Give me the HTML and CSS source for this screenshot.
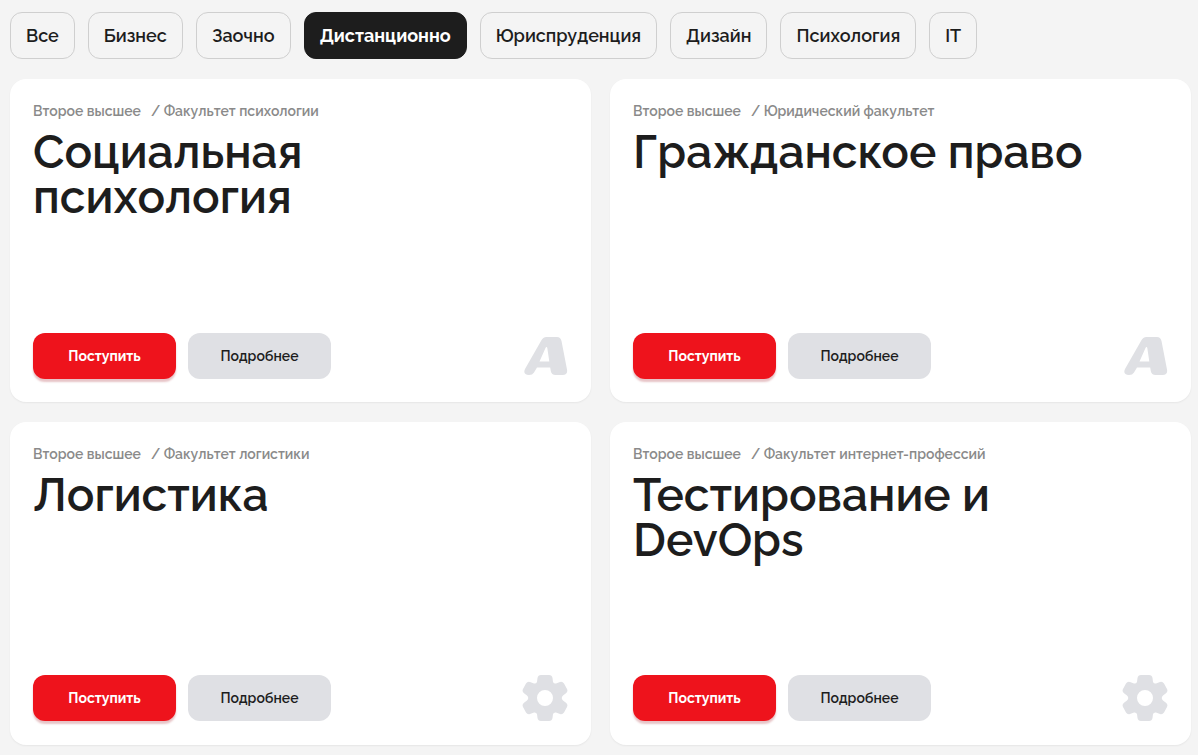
FILE: index.html
```html
<!DOCTYPE html>
<html lang="ru">
<head>
    <meta charset="UTF-8">
    <meta name="viewport" content="width=device-width, initial-scale=1.0">
    <title>Программы обучения</title>
    <link rel="stylesheet" href="styles.css">
</head>
<body>

    <!-- Общие иконки карточек -->
    <svg class="sprite" aria-hidden="true">
        <symbol id="icon-letter" viewBox="0 0 44 40">
            <path fill-rule="evenodd" d="M22.500 1H33Q36.500 1 37.500 5L43 33.500Q44 39 38.500 39H31.500Q27.500 39 26.800 35L26.200 31.500H13L10 36.500Q8.500 39 5 39Q-1.500 38.500 1 33L17 5Q19 1 22.500 1ZM22.500 11Q21.900 11 21.500 12L15.500 25.500H25.300L23.300 12Q23.100 11 22.500 11Z"/>
        </symbol>
        <symbol id="icon-gear" viewBox="0 0 46 48">
            <path fill-rule="evenodd" d="M19 1H27Q30 1 30.500 4L31 8Q32 10 34 9.500L38 8Q40.500 7.200 42 9.500L45 15Q46.200 17.500 44 19.200L41 21.500Q38.500 24 41 26.500L44 28.800Q46.200 30.500 45 33L42 38.500Q40.500 40.800 38 40L34 38.500Q32 38 31 40L30.500 44Q30 47 27 47H19Q16 47 15.500 44L15 40Q14 38 12 38.500L8 40Q5.500 40.800 4 38.500L1 33Q-.2 30.500 2 28.800L5 26.500Q7.500 24 5 21.500L2 19.200Q-.2 17.500 1 15L4 9.500Q5.500 7.200 8 8L12 9.500Q14 10 15 8L15.500 4Q16 1 19 1ZM23 16A8 8 0 1 0 23 32A8 8 0 1 0 23 16Z"/>
        </symbol>
    </svg>

    <!-- Фильтры -->
    <nav class="filters">
        <button type="button" class="filter">Все</button>
        <button type="button" class="filter">Бизнес</button>
        <button type="button" class="filter">Заочно</button>
        <button type="button" class="filter active">Дистанционно</button>
        <button type="button" class="filter">Юриспруденция</button>
        <button type="button" class="filter">Дизайн</button>
        <button type="button" class="filter">Психология</button>
        <button type="button" class="filter">IT</button>
    </nav>

    <!-- Карточки программ -->
    <main class="cards">
        <article class="card">
            <p class="path"><span>Второе высшее</span><span>/ Факультет психологии</span></p>
            <h2>Социальная психология</h2>
            <div class="card-footer">
                <button type="button" class="btn btn-red">Поступить</button>
                <button type="button" class="btn">Подробнее</button>
                <svg class="icon icon-letter" aria-hidden="true"><use href="#icon-letter"/></svg>
            </div>
        </article>

        <article class="card">
            <p class="path"><span>Второе высшее</span><span>/ Юридический факультет</span></p>
            <h2>Гражданское право</h2>
            <div class="card-footer">
                <button type="button" class="btn btn-red">Поступить</button>
                <button type="button" class="btn">Подробнее</button>
                <svg class="icon icon-letter" aria-hidden="true"><use href="#icon-letter"/></svg>
            </div>
        </article>

        <article class="card">
            <p class="path"><span>Второе высшее</span><span>/ Факультет логистики</span></p>
            <h2>Логистика</h2>
            <div class="card-footer">
                <button type="button" class="btn btn-red">Поступить</button>
                <button type="button" class="btn">Подробнее</button>
                <svg class="icon icon-gear" aria-hidden="true"><use href="#icon-gear"/></svg>
            </div>
        </article>

        <article class="card">
            <p class="path"><span>Второе высшее</span><span>/ Факультет интернет-профессий</span></p>
            <h2>Тестирование и DevOps</h2>
            <div class="card-footer">
                <button type="button" class="btn btn-red">Поступить</button>
                <button type="button" class="btn">Подробнее</button>
                <svg class="icon icon-gear" aria-hidden="true"><use href="#icon-gear"/></svg>
            </div>
        </article>
    </main>

</body>
</html>
```
FILE: styles.css
```css
/* Общие стили */
* {
    margin: 0;
    padding: 0;
    box-sizing: border-box;
}

body {
    background-color: #f4f4f4;
    color: #1d1d1d;
    font-family: Raleway, Lato, sans-serif;
    padding: 12px 7px 10px 10px;
}

button {
    font-family: inherit;
    color: inherit;
    cursor: pointer;
}

.sprite {
    display: none;
}

/* Фильтры */
.filters {
    display: flex;
    flex-wrap: wrap;
    gap: 13px;
    margin-bottom: 20px;
}

.filter {
    height: 47px;
    padding: 0 15px;
    border: 1px solid #cfcfcf;
    border-radius: 12px;
    background: none;
    font-size: 18px;
    font-weight: 600;
}

.filter.active {
    background-color: #1d1d1d;
    border-color: #1d1d1d;
    color: #fff;
    font-weight: 700;
}

/* Карточки */
.cards {
    display: grid;
    grid-template-columns: 1fr 1fr;
    gap: 20px 19px;
}

.card {
    display: flex;
    flex-direction: column;
    min-height: 323px;
    padding: 23px;
    border-radius: 16px;
    background-color: #fff;
    box-shadow: 0 1px 2px rgba(0, 0, 0, 0.06);
}

.path {
    display: flex;
    gap: 10px;
    margin-bottom: 10px;
    color: #8a8a8a;
    font-size: 14px;
    font-weight: 600;
    line-height: 18px;
}

.card h2 {
    max-width: 500px;
    font-size: 46px;
    font-weight: 600;
    line-height: 45px;
}

.card-footer {
    display: flex;
    align-items: center;
    gap: 12px;
    margin-top: auto;
}

.btn {
    width: 143px;
    height: 46px;
    border: none;
    border-radius: 12px;
    background-color: #dfe0e4;
    font-size: 14px;
    font-weight: 600;
}

.btn-red {
    background-color: #ee131c;
    box-shadow: 0 3px 2px rgba(160, 20, 30, 0.25);
    color: #fff;
    font-weight: 700;
}

.icon {
    margin-left: auto;
    fill: #dfe0e4;
}

.icon-letter {
    width: 44px;
    height: 40px;
}

.icon-gear {
    width: 46px;
    height: 48px;
}
```
